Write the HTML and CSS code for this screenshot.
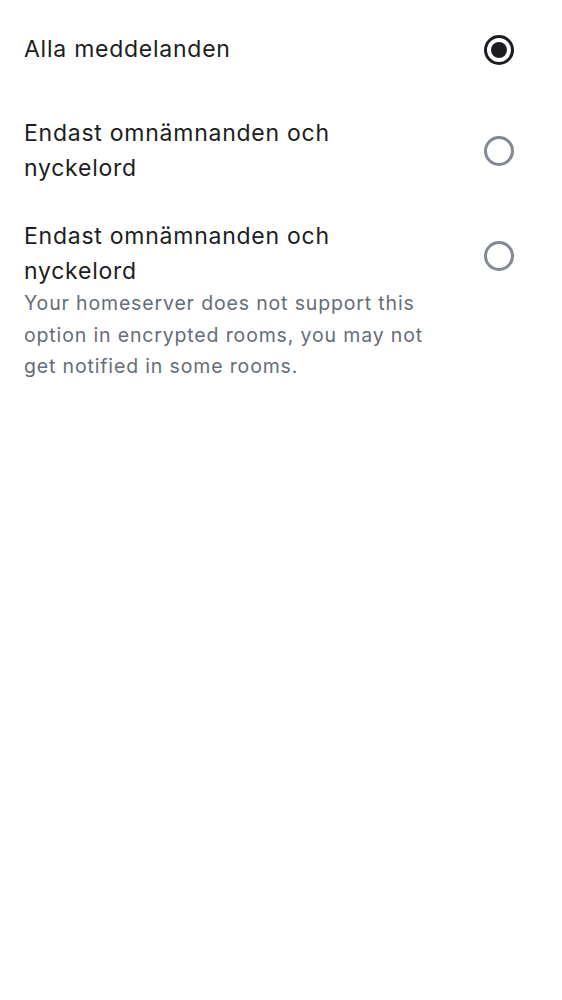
FILE: index.html
```html
<!DOCTYPE html>
<html lang="sv">
<head>
<meta charset="utf-8">
<link rel="stylesheet" href="styles.css">
</head>
<body>
<div class="list">
  <div class="row row-single">
    <div class="text">
      <div class="title">Alla meddelanden</div>
    </div>
    <div class="radio-box"><span class="radio selected"></span></div>
  </div>
  <div class="row">
    <div class="text">
      <div class="title">Endast omnämnanden och nyckelord</div>
    </div>
    <div class="radio-box"><span class="radio"></span></div>
  </div>
  <div class="row row-top">
    <div class="text">
      <div class="title">Endast omnämnanden och nyckelord</div>
      <div class="subtitle">Your homeserver does not support this option in encrypted rooms, you may not get notified in some rooms.</div>
    </div>
    <div class="radio-box"><span class="radio"></span></div>
  </div>
</div>
</body>
</html>
```

FILE: styles.css
```css
html, body {
  margin: 0;
  padding: 0;
  background: #ffffff;
}
body {
  font-family: Inter, "Noto Sans", sans-serif;
  color: #1b1d22;
}
.list {
  display: flex;
  flex-direction: column;
}
.row {
  display: flex;
  align-items: center;
  padding: 17px 30px 16px 24px;
  gap: 20px;
}
.row-single {
  min-height: 99px;
  box-sizing: border-box;
  padding-top: 0;
  padding-bottom: 0;
}
.row-top {
  align-items: flex-start;
}
.row-top .radio-box {
  margin-top: 4px;
}
.text {
  flex: 1;
  min-width: 0;
}
.title {
  font-size: 23px;
  line-height: 35px;
  letter-spacing: 0.75px;
  color: #1b1d22;
}
.subtitle {
  margin-top: -1px;
  font-size: 19.5px;
  line-height: 31.5px;
  letter-spacing: 0.85px;
  color: #656d77;
}
.radio-box {
  width: 66px;
  height: 66px;
  display: flex;
  align-items: center;
  justify-content: center;
  flex: none;
}
.radio {
  width: 30px;
  height: 30px;
  box-sizing: border-box;
  border: 3px solid #818993;
  border-radius: 50%;
  display: flex;
  align-items: center;
  justify-content: center;
}
.radio.selected {
  border-color: #1b1d22;
}
.radio.selected::after {
  content: "";
  width: 16px;
  height: 16px;
  border-radius: 50%;
  background: #1b1d22;
}
```
